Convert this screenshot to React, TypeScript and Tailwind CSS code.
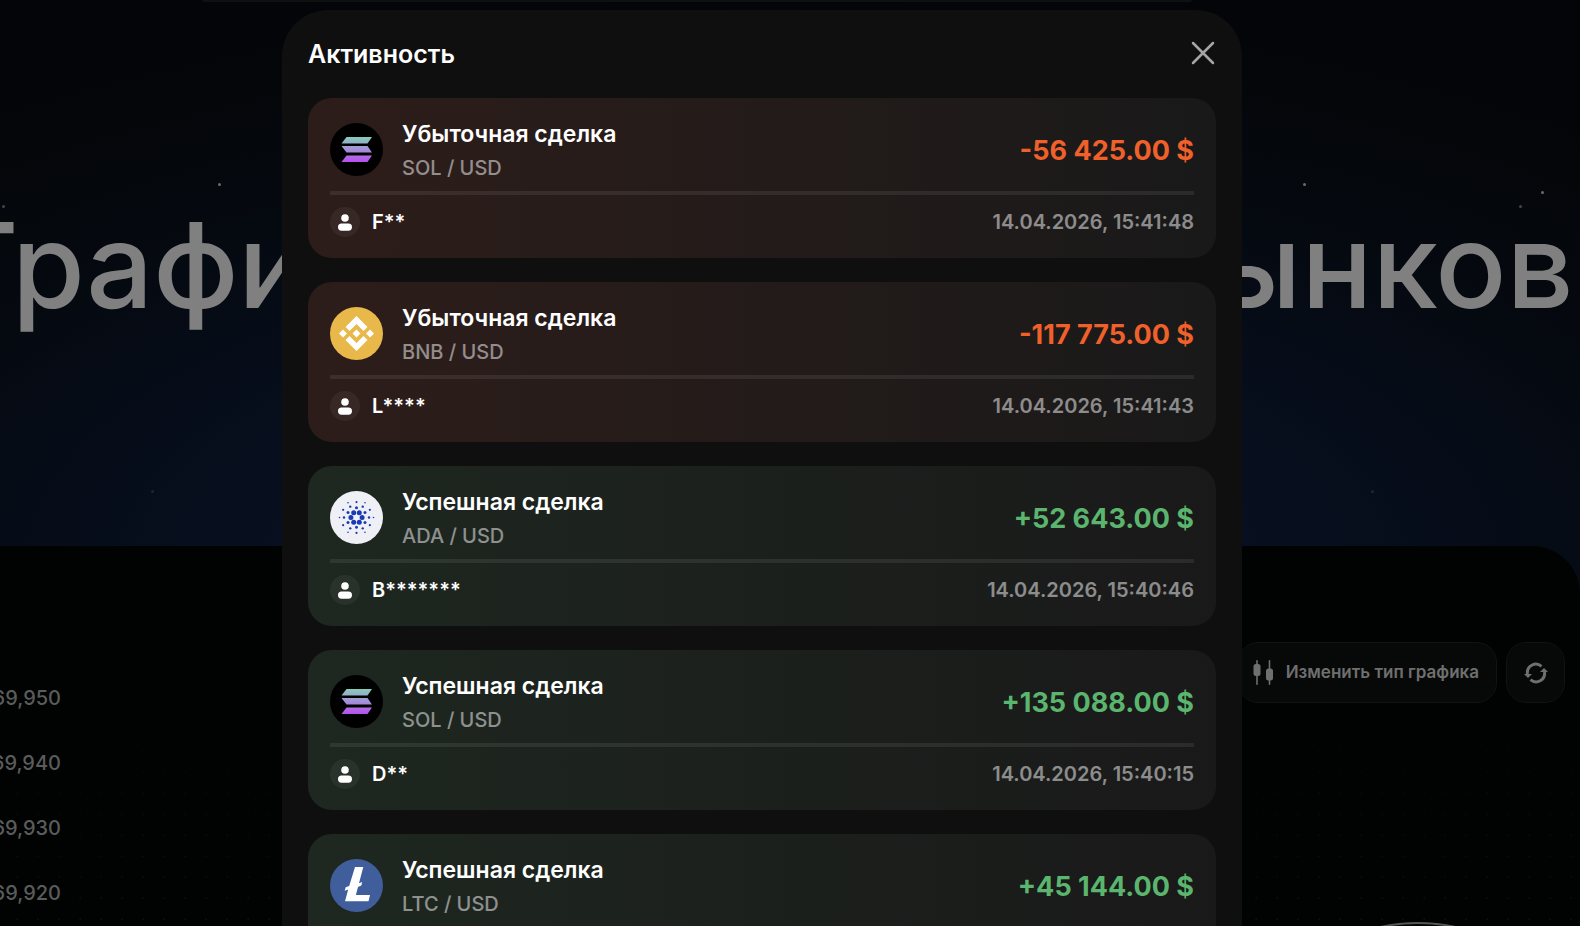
import { clsx } from 'clsx'

type Coin = 'SOL' | 'BNB' | 'ADA' | 'LTC'

interface Deal {
  coin: Coin
  amount: string
  user: string
  date: string
}

const DEALS: Deal[] = [
  { coin: 'SOL', amount: '-56 425.00 $', user: 'F**', date: '14.04.2026, 15:41:48' },
  { coin: 'BNB', amount: '-117 775.00 $', user: 'L****', date: '14.04.2026, 15:41:43' },
  { coin: 'ADA', amount: '+52 643.00 $', user: 'B*******', date: '14.04.2026, 15:40:46' },
  { coin: 'SOL', amount: '+135 088.00 $', user: 'D**', date: '14.04.2026, 15:40:15' },
  { coin: 'LTC', amount: '+45 144.00 $', user: 'A****', date: '14.04.2026, 15:39:52' },
]

const PRICES = ['69,950', '69,940', '69,930', '69,920']

const STARS = [
  { x: 219, y: 184, o: 0.4 },
  { x: 3, y: 206, o: 0.25 },
  { x: 152, y: 491, o: 0.1 },
  { x: 1304, y: 184, o: 0.4 },
  { x: 1542, y: 192, o: 0.4 },
  { x: 1520, y: 206, o: 0.25 },
  { x: 1372, y: 491, o: 0.1 },
]

export default function App() {
  return (
    <div className="relative h-screen overflow-hidden bg-[#040508] font-['Inter',sans-serif] text-white">
      <Backdrop />
      {/* the page is wider than the window, its middle sits 28px left of centre */}
      <div className="absolute inset-0 -left-14 flex justify-center pt-[10px]">
        <ActivityDialog />
      </div>
    </div>
  )
}

function Backdrop() {
  return (
    <div className="-ml-14 flex h-full flex-col bg-[radial-gradient(ellipse_80%_62%_at_50%_62%,#08152b_0%,#070f1f_40%,#05090f_75%,#040508_100%)]">
      {STARS.map((s) => (
        <span
          key={`${s.x}-${s.y}`}
          className="absolute size-[3px] rounded-full bg-white"
          style={{ left: s.x - 1, top: s.y - 1, opacity: s.o }}
        />
      ))}
      <div className="ml-[258px] h-[2px] w-[990px] shrink-0 rounded-b-full bg-[#0f1010]" />
      <h1 className="mt-[198px] flex h-[346px] shrink-0 gap-12 self-center text-[118px] leading-[130px] font-medium text-[#808080]">
        <span>Графики</span>
        <span>фондовых</span>
        <span>рынков</span>
      </h1>
      <section className="relative flex flex-1 items-start justify-between overflow-hidden rounded-t-[48px] bg-[#010202] bg-[linear-gradient(#010202_35%,transparent),radial-gradient(circle,#0b0d0c_1px,transparent_1px)] bg-size-[100%_100%,21px_21px] bg-position-[0px_0px,0px_6px] pt-[96px]">
        <ul className="mt-6 w-[117px] text-right text-[20px] leading-[65px] font-medium text-[#5a5c5b]">
          {PRICES.map((price) => (
            <li key={price}>{price}</li>
          ))}
        </ul>
        <div className="flex gap-[9px] pr-[15px]">
          <button className="flex h-[61px] items-center gap-[12px] rounded-[20px] border border-[#111312] bg-[#070908] pr-[17px] pl-[14px] text-[17px] font-semibold text-[#6f6f6f]">
            <CandlesIcon />
            Изменить тип графика
          </button>
          <button
            aria-label="Обновить"
            className="flex h-[61px] w-[59px] items-center justify-center rounded-[20px] border border-[#111312] bg-[#070908] text-[#6f6f6f]"
          >
            <RefreshIcon />
          </button>
        </div>
        <span className="absolute top-[376px] right-[-18px] size-[360px] rounded-full border-2 border-[#555]" />
      </section>
    </div>
  )
}

function ActivityDialog() {
  return (
    <div
      role="dialog"
      aria-labelledby="activity-title"
      className="w-[960px] rounded-t-[46px] bg-[#0f0f0f] px-[26px]"
    >
      <header className="flex h-[88px] items-center justify-between">
        <h2 id="activity-title" className="text-[25px] leading-[34px] font-semibold">
          Активность
        </h2>
        <button aria-label="Закрыть" className="pr-px pb-[3px] text-[#a6a6a6]">
          <CloseIcon />
        </button>
      </header>
      <ul className="flex flex-col gap-6">
        {DEALS.map((deal) => (
          <DealCard key={deal.date} deal={deal} />
        ))}
      </ul>
    </div>
  )
}

function DealCard({ deal }: { deal: Deal }) {
  const loss = deal.amount.startsWith('-')
  return (
    <li
      className={clsx(
        'rounded-3xl bg-linear-to-r px-[22px] pt-[19px] pb-[21px]',
        loss ? 'from-[#2d1d1a] to-[#191919]' : 'from-[#1e2720] to-[#191919]',
      )}
    >
      <div className="flex items-center">
        <CoinIcon coin={deal.coin} />
        <div className="ml-[19px] flex-1">
          <p className="text-[23px] leading-[34px] font-semibold">
            {loss ? 'Убыточная сделка' : 'Успешная сделка'}
          </p>
          <p className="text-[20px] leading-[34px] font-medium text-white/50">{deal.coin} / USD</p>
        </div>
        <p className={clsx('text-[27px] leading-[34px] font-bold', loss ? 'text-[#f0602a]' : 'text-[#5bb56e]')}>
          {deal.amount}
        </p>
      </div>
      <div className="mt-[6px] h-1 bg-white/8" />
      <div className="mt-3 flex items-center text-[20px] leading-[30px]">
        <span className="flex size-[30px] items-center justify-center rounded-full bg-white/5">
          <UserIcon />
        </span>
        <span className="ml-[12px] flex-1 font-semibold">{deal.user}</span>
        <time className="font-semibold text-white/50">{deal.date}</time>
      </div>
    </li>
  )
}

function CoinIcon({ coin }: { coin: Coin }) {
  return (
    <svg viewBox="0 0 53 53" className="mt-[6px] size-[53px] shrink-0 self-start">
      {coin === 'SOL' && <SolMark />}
      {coin === 'BNB' && <BnbMark />}
      {coin === 'ADA' && <AdaMark />}
      {coin === 'LTC' && <LtcMark />}
    </svg>
  )
}

function SolMark() {
  return (
    <>
      <defs>
        <linearGradient id="sol" gradientUnits="userSpaceOnUse" x1="26" y1="14" x2="26" y2="39">
          <stop offset="0" stopColor="#86ccb9" />
          <stop offset="0.5" stopColor="#a392d8" />
          <stop offset="1" stopColor="#b94df0" />
        </linearGradient>
      </defs>
      <circle cx="26.500" cy="26.500" r="26.500" fill="#000" />
      <g fill="url(#sol)">
        <path d="M16.500 14H42L37.500 20.500H11.500Z" />
        <path d="M11.500 23H37.500L42 29.500H16.500Z" />
        <path d="M16.500 32.500H42L37.500 39H11.500Z" />
      </g>
    </>
  )
}

function BnbMark() {
  return (
    <>
      <circle cx="26.500" cy="26.500" r="26.500" fill="#e8b94a" />
      <g fill="#fff">
        <path d="M26.500 9 37.500 20 33.500 24 26.500 17 19.500 24 15.500 20Z" />
        <path d="M26.500 44 37.500 33 33.500 29 26.500 36 19.500 29 15.500 33Z" />
        <path d="M26.500 22.500 30.500 26.500 26.500 30.500 22.500 26.500Z" />
        <path d="M13 22.500 17 26.500 13 30.500 9 26.500Z" />
        <path d="M40 22.500 44 26.500 40 30.500 36 26.500Z" />
      </g>
    </>
  )
}

// rings of dots: radius, dot size, count, start angle
const ADA_RINGS = [
  [5.6, 2.5, 6, 0],
  [9.8, 1.5, 6, 30],
  [12.5, 1.2, 6, 0],
  [15.4, 1.1, 6, 30],
  [17, 0.8, 6, 0],
]

function AdaMark() {
  return (
    <>
      <circle cx="26.500" cy="26.500" r="26.500" fill="#eff0f5" />
      <g fill="#1a3bb3">
        {ADA_RINGS.flatMap(([r, dot, count, start]) =>
          Array.from({ length: count }, (_, i) => {
            const a = ((start + (i * 360) / count) * Math.PI) / 180
            return (
              <circle key={`${r}-${i}`} cx={26.5 + r * Math.cos(a)} cy={26.5 + r * Math.sin(a)} r={dot} />
            )
          }),
        )}
      </g>
    </>
  )
}

function LtcMark() {
  return (
    <>
      <circle cx="26.500" cy="26.500" r="26.500" fill="#3f5e9b" />
      <path
        fill="#fff"
        d="M25 8H33.300L29 24.200 32.200 23 31.300 26.600 28 27.900 25.900 36H40L38.500 42.300H15L18.200 30.500 14.700 31.800 15.700 28.300 19.200 27Z"
      />
    </>
  )
}

function UserIcon() {
  return (
    <svg viewBox="0 0 14 17" className="h-[17px] w-[14px]" fill="#fff">
      <circle cx="7" cy="4" r="3.800" />
      <rect x="0" y="9.500" width="14" height="7.200" rx="3.600" />
    </svg>
  )
}

function CloseIcon() {
  return (
    <svg viewBox="0 0 24 24" className="size-6" fill="none" stroke="currentColor" strokeWidth="2.500" strokeLinecap="round">
      <path d="M2 2 22 22M22 2 2 22" />
    </svg>
  )
}

function CandlesIcon() {
  return (
    <svg viewBox="0 0 21 25" className="h-[25px] w-[21px]" fill="currentColor">
      <rect x="3.200" y="0" width="1.600" height="25" rx="0.800" />
      <rect x="0.500" y="4" width="7" height="12" rx="2.500" />
      <rect x="15.700" y="0" width="1.600" height="25" rx="0.800" />
      <rect x="13" y="8.500" width="7" height="12" rx="2.500" />
    </svg>
  )
}

function RefreshIcon() {
  return (
    <svg viewBox="0 0 24 22" className="h-[22px] w-6" fill="none" stroke="currentColor" strokeWidth="3">
      <path d="M3.500 12A8.500 8.500 0 0 1 17.500 4.300" />
      <path d="M20.500 10A8.500 8.500 0 0 1 6.500 17.700" />
      <path fill="currentColor" stroke="none" d="M0 12H8L4 16ZM24 10H16L20 6Z" />
    </svg>
  )
}
